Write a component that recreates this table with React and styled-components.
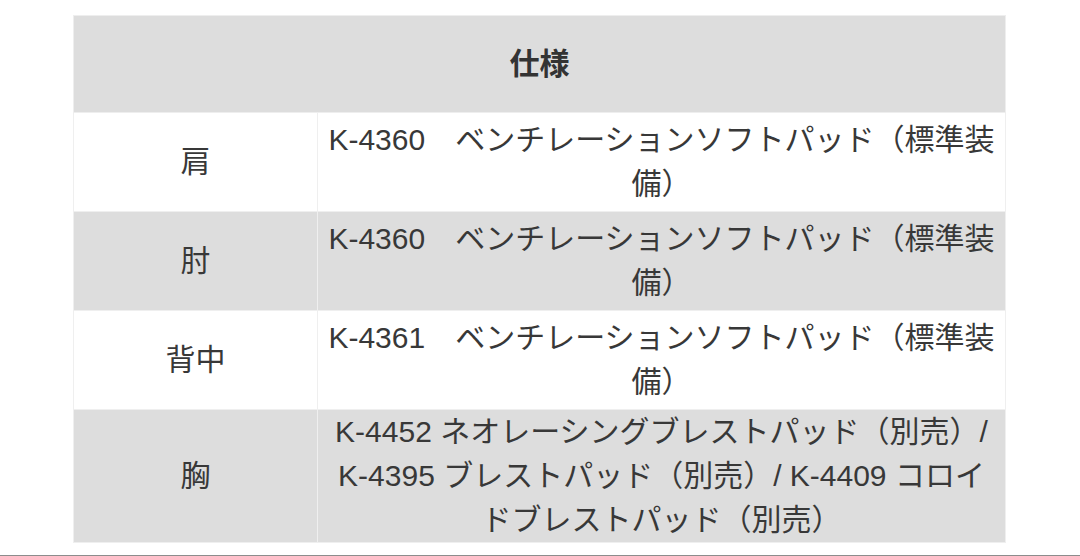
import React from "react";
import styled, { createGlobalStyle } from "styled-components";

const GlobalStyle = createGlobalStyle`
	html, body {
		margin: 0;
		padding: 0;
		background: #ffffff;
	}
	body {
		font-family: "Liberation Sans", "Noto Sans CJK JP", sans-serif;
		color: #383838;
	}
`;

const Page = styled.div`
	width: 1080px;
	height: 556px;
	overflow: hidden;
	padding-top: 15px;
	box-sizing: border-box;
`;

const SpecTable = styled.table`
	width: 933px;
	margin-left: 73px;
	border-collapse: collapse;
	table-layout: fixed;
	font-size: 30px;
	line-height: 44px;
`;

const HeadCell = styled.th`
	background: #dddddd;
	border: 1px solid #eeeeee;
	padding: 26px 10px;
	font-weight: 700;
	text-align: center;
	color: #333333;
`;

const Row = styled.tr`
	background: ${(p) => (p.$shaded ? "#dddddd" : "#ffffff")};
`;

const LabelCell = styled.td`
	width: 244px;
	border: 1px solid #efefef;
	text-align: center;
	vertical-align: middle;
	padding: 0 10px;
`;

const ValueCell = styled.td`
	border: 1px solid #efefef;
	text-align: center;
	vertical-align: middle;
	padding: ${(p) => (p.$tight ? "0" : "5px")} 10px;
`;

const Divider = styled.div`
	height: 2px;
	background: #8c8c8c;
	margin-top: 12px;
`;

const specs = [
	{ part: "肩", text: "K-4360　ベンチレーションソフトパッド（標準装備）" },
	{ part: "肘", text: "K-4360　ベンチレーションソフトパッド（標準装備）" },
	{ part: "背中", text: "K-4361　ベンチレーションソフトパッド（標準装備）" },
	{
		part: "胸",
		text: "K-4452 ネオレーシングブレストパッド（別売）/ K-4395 ブレストパッド（別売）/ K-4409 コロイドブレストパッド（別売）",
		tight: true
	}
];

const App = () => (
	<Page>
		<GlobalStyle />
		<SpecTable>
			<colgroup>
				<col style={{ width: 244 }} />
				<col />
			</colgroup>
			<thead>
				<tr>
					<HeadCell colSpan={2}>仕様</HeadCell>
				</tr>
			</thead>
			<tbody>
				{specs.map((s, i) => (
					<Row key={s.part} $shaded={i % 2 === 1}>
						<LabelCell>{s.part}</LabelCell>
						<ValueCell $tight={s.tight}>{s.text}</ValueCell>
					</Row>
				))}
			</tbody>
		</SpecTable>
		<Divider />
	</Page>
);

export default App;
